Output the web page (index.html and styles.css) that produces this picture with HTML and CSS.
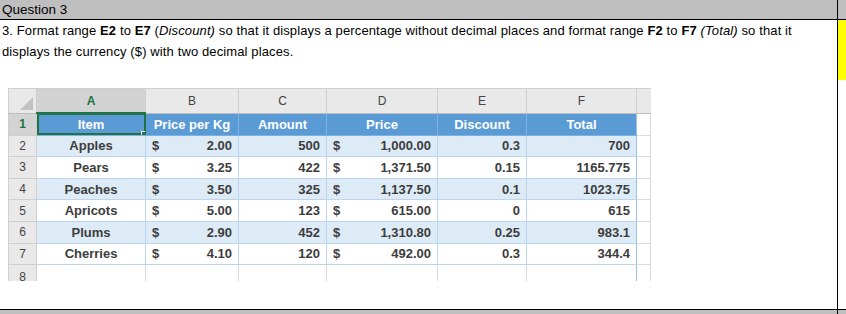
FILE: index.html
```html
<!DOCTYPE html>
<html lang="en">
<head>
    <meta charset="UTF-8">
    <title>Question 3</title>
    <link rel="stylesheet" href="styles.css">
</head>
<body>
    <div class="doc">
        <!-- heading row -->
        <div class="doc-row head-row">
            <div class="main-cell">Question 3</div>
            <div class="side-cell"></div>
        </div>

        <!-- question body -->
        <div class="doc-row body-row">
            <div class="main-cell">
                <p class="question">3. Format range <b>E2</b> to <b>E7</b> (<i>Discount)</i> so that it displays a percentage without decimal places and format range <b>F2</b> to <b>F7</b> <i>(Total)</i> so that it displays the currency ($) with two decimal places.</p>

                <table class="sheet">
                    <colgroup>
                        <col class="c-rowhead">
                        <col class="c-a">
                        <col class="c-b">
                        <col class="c-c">
                        <col class="c-d">
                        <col class="c-e">
                        <col class="c-f">
                        <col class="c-g">
                    </colgroup>
                    <tr class="col-heads">
                        <th class="corner"><span class="corner-tri"></span></th>
                        <th class="sel-col">A</th>
                        <th>B</th>
                        <th>C</th>
                        <th>D</th>
                        <th>E</th>
                        <th>F</th>
                        <th></th>
                    </tr>
                    <tr class="tbl-head">
                        <td class="rowhead sel-row">1</td>
                        <td class="active-cell">Item<span class="fill-handle"></span></td>
                        <td>Price per Kg</td>
                        <td>Amount</td>
                        <td>Price</td>
                        <td>Discount</td>
                        <td>Total</td>
                        <td class="empty"></td>
                    </tr>
                    <tr class="band">
                        <td class="rowhead">2</td>
                        <td class="name">Apples</td>
                        <td><span class="money"><span>$</span><span>2.00</span></span></td>
                        <td class="num">500</td>
                        <td><span class="money"><span>$</span><span>1,000.00</span></span></td>
                        <td class="num">0.3</td>
                        <td class="num">700</td>
                        <td class="empty"></td>
                    </tr>
                    <tr>
                        <td class="rowhead">3</td>
                        <td class="name">Pears</td>
                        <td><span class="money"><span>$</span><span>3.25</span></span></td>
                        <td class="num">422</td>
                        <td><span class="money"><span>$</span><span>1,371.50</span></span></td>
                        <td class="num">0.15</td>
                        <td class="num">1165.775</td>
                        <td class="empty"></td>
                    </tr>
                    <tr class="band">
                        <td class="rowhead">4</td>
                        <td class="name">Peaches</td>
                        <td><span class="money"><span>$</span><span>3.50</span></span></td>
                        <td class="num">325</td>
                        <td><span class="money"><span>$</span><span>1,137.50</span></span></td>
                        <td class="num">0.1</td>
                        <td class="num">1023.75</td>
                        <td class="empty"></td>
                    </tr>
                    <tr>
                        <td class="rowhead">5</td>
                        <td class="name">Apricots</td>
                        <td><span class="money"><span>$</span><span>5.00</span></span></td>
                        <td class="num">123</td>
                        <td><span class="money"><span>$</span><span>615.00</span></span></td>
                        <td class="num">0</td>
                        <td class="num">615</td>
                        <td class="empty"></td>
                    </tr>
                    <tr class="band">
                        <td class="rowhead">6</td>
                        <td class="name">Plums</td>
                        <td><span class="money"><span>$</span><span>2.90</span></span></td>
                        <td class="num">452</td>
                        <td><span class="money"><span>$</span><span>1,310.80</span></span></td>
                        <td class="num">0.25</td>
                        <td class="num">983.1</td>
                        <td class="empty"></td>
                    </tr>
                    <tr>
                        <td class="rowhead">7</td>
                        <td class="name">Cherries</td>
                        <td><span class="money"><span>$</span><span>4.10</span></span></td>
                        <td class="num">120</td>
                        <td><span class="money"><span>$</span><span>492.00</span></span></td>
                        <td class="num">0.3</td>
                        <td class="num">344.4</td>
                        <td class="empty"></td>
                    </tr>
                    <tr class="cut-row">
                        <td class="rowhead"><span class="cut">8</span></td>
                        <td class="empty"></td>
                        <td class="empty"></td>
                        <td class="empty"></td>
                        <td class="empty"></td>
                        <td class="empty"></td>
                        <td class="empty"></td>
                        <td class="empty"></td>
                    </tr>
                </table>
            </div>
            <div class="side-cell">
                <div class="marker"></div>
            </div>
        </div>

        <!-- next row, cut off -->
        <div class="doc-row next-row">
            <div class="main-cell"></div>
            <div class="side-cell"></div>
        </div>
    </div>
</body>
</html>
```

FILE: styles.css
```css
body {
    margin: 0;
    padding: 0;
    font-family: "Liberation Sans", Arial, sans-serif;
    font-size: 13px;
    color: #000;
    background: #fff;
}

.doc {
    width: 846px;
    height: 314px;
    overflow: hidden;
}

.doc-row {
    display: flex;
    border-bottom: 1px solid #000;
}

.main-cell {
    width: 838px;
    border-right: 1px solid #000;
    box-sizing: border-box;
    padding: 0 2px;
}

.side-cell {
    flex: 1;
}

/* heading */
.head-row {
    height: 19px;
    background: #bfbfbf;
}

.head-row .main-cell {
    line-height: 19px;
    font-size: 13.5px;
}

/* body */
.body-row {
    height: 289px;
}

.question {
    margin: 0;
    padding-top: 1px;
    padding-right: 4px;
    line-height: 20.5px;
    font-size: 13px;
    letter-spacing: 0.12px;
}

.marker {
    height: 60px;
    background: #ffff00;
}

.next-row {
    height: 10px;
    background: #bfbfbf;
    border-bottom: none;
}

/* spreadsheet picture */
.sheet {
    margin: 26px 0 0 6px;
    border-collapse: collapse;
    table-layout: fixed;
    width: 642px;
    font-size: 13px;
    font-weight: bold;
    color: #3c3c3c;
}

.c-rowhead { width: 28px; }
.c-a { width: 109px; }
.c-b { width: 93px; }
.c-c { width: 88px; }
.c-d { width: 111px; }
.c-e { width: 89px; }
.c-f { width: 110px; }
.c-g { width: 14px; }

.sheet td,
.sheet th {
    padding: 0 6px;
    height: 20.6px;
    white-space: nowrap;
    overflow: hidden;
    border: 1px solid #bcd5ee;
}

.col-heads th {
    height: 23px;
    background: #e9e9e9;
    border: 1px solid #cfcfcf;
    border-bottom-color: #bdbdbd;
    font-weight: normal;
    font-size: 12px;
    color: #444;
    text-align: center;
}

.col-heads th.sel-col {
    background: #d3d3d3;
    color: #217346;
    font-weight: bold;
    border-bottom: 2px solid #217346;
}

.col-heads th:last-child {
    border-right: none;
}

.corner {
    position: relative;
}

.corner-tri {
    position: absolute;
    right: 3px;
    bottom: 3px;
    width: 0;
    height: 0;
    border-left: 13px solid transparent;
    border-bottom: 13px solid #c2c2c2;
}

.rowhead {
    background: #e9e9e9;
    border-color: #cfcfcf !important;
    font-weight: normal;
    font-size: 12px;
    color: #444;
    text-align: center;
    padding: 0 !important;
}

.rowhead.sel-row {
    background: #d3d3d3;
    color: #217346;
    font-weight: bold;
}

.tbl-head td {
    background: #5b9bd5;
    color: #fff;
    text-align: center;
    border-color: #7fb1e0;
}

.tbl-head td.rowhead {
    color: #217346;
}

.active-cell {
    position: relative;
    outline: 2px solid #217346;
    outline-offset: -2px;
}

.fill-handle {
    position: absolute;
    right: -3px;
    bottom: -3px;
    width: 5px;
    height: 5px;
    background: #217346;
    border: 1px solid #fff;
}

.band td {
    background: #ddebf7;
}

.band td.rowhead {
    background: #e9e9e9;
}

.name {
    text-align: center;
}

.num {
    text-align: right;
}

.money {
    display: flex;
    justify-content: space-between;
}

.sheet td.empty {
    background: #fff;
    border-color: #dadada;
}

.sheet tr td:nth-child(7) {
    border-right-color: #9bc2e6;
}

.cut-row td {
    height: 16px;
    border-bottom: none;
}

.cut {
    display: block;
    height: 16px;
    line-height: 25px;
    overflow: hidden;
}
```
